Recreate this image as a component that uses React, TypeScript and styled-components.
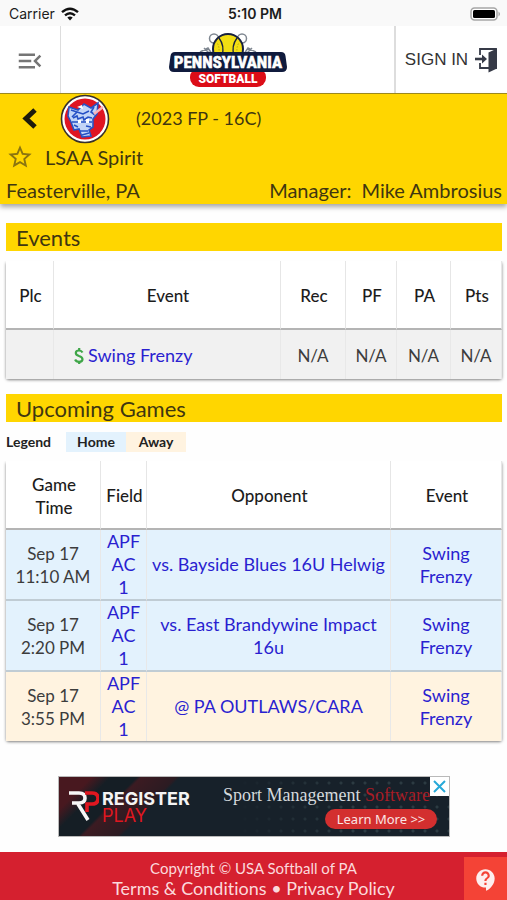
import React from "react";
import styled, { createGlobalStyle } from "styled-components";
import { MdContactSupport, MdMenuOpen, MdStarBorder } from "react-icons/md";

const GlobalStyle = createGlobalStyle`
  * { box-sizing: border-box; }
  body {
    margin: 0;
    background: #fefefe;
    color: #222;
    font-family: Lato, "Open Sans", sans-serif;
    font-size: 17px;
    line-height: 23px;
    font-variant-ligatures: none;
  }
  button { border: 0; padding: 0; background: none; font: inherit; color: inherit; cursor: pointer; }
  a { color: inherit; text-decoration: none; }
`;

const Page = styled.div`
  display: flex;
  flex-direction: column;
  min-height: 100vh;
`;

const StatusBar = styled.div`
  display: grid;
  grid-template-columns: 1fr auto 1fr;
  align-items: center;
  height: 26px;
  padding: 2px 6px 0 9px;
  background: #f9f9f9;
  color: #1c1c1c;
  font: 14px/20px Inter, sans-serif;
`;

const Carrier = styled.span`
  display: flex;
  align-items: center;
  gap: 6px;
`;

const Clock = styled.span`
  font-weight: 600;
`;

const Battery = styled.svg`
  justify-self: end;
`;

const TopBar = styled.header`
  display: grid;
  grid-template-columns: 61px 1fr 113px;
  height: 68px;
  background: #fff;
  border-bottom: 1px solid #a08c20;
`;

const MenuButton = styled.button`
  display: flex;
  align-items: center;
  justify-content: center;
  padding-top: 2px;
  border-right: 1px solid #ddd;
  color: #757575;
`;

const LogoLink = styled.a`
  display: flex;
  align-items: center;
  justify-content: center;
`;

const SignIn = styled.button`
  display: flex;
  align-items: center;
  justify-content: center;
  gap: 6px;
  border-left: 2px solid #ddd;
  color: #333;
  font: 17px/20px "Liberation Sans", sans-serif;
`;

const TeamPanel = styled.section`
  height: 110px;
  padding: 0 5px 0 6px;
  background: #ffd600;
  color: #3f3610;
  box-shadow: 0 3px 5px rgba(0, 0, 0, 0.35);
`;

const TeamTop = styled.div`
  display: flex;
  align-items: center;
  height: 49px;
  padding-left: 15px;
`;

const BackButton = styled.button`
  display: flex;
  margin-right: 22px;
`;

const Season = styled.span`
  margin-left: 26px;
  font-size: 18px;
`;

const TeamName = styled.div`
  display: flex;
  align-items: center;
  gap: 11px;
  height: 28px;
  font-size: 20px;
`;

const StarButton = styled.button`
  display: flex;
  color: #8a7410;
`;

const TeamPlace = styled.div`
  display: flex;
  align-items: center;
  justify-content: space-between;
  padding-top: 8px;
  font-size: 20px;
`;

const Manager = styled.span`
  display: flex;
  gap: 10px;
`;

const Main = styled.main`
  flex: 1;
  padding: 19px 5px 14px 6px;
`;

const SectionTitle = styled.h2`
  margin: 0 0 10px;
  padding: 1px 10px 0;
  background: #ffd600;
  color: #3f3610;
  font-size: 22px;
  font-weight: 400;
  line-height: 27px;
`;

const Table = styled.table`
  width: 100%;
  margin-bottom: 15px;
  table-layout: fixed;
  border-collapse: separate;
  border-spacing: 0;
  border-radius: 3px;
  box-shadow: 0 1px 3px rgba(0, 0, 0, 0.5);
  clip-path: inset(0 -4px -6px -4px);
`;

const Col = styled.col<{ $width?: number }>`
  width: ${(p) => (p.$width ? `${p.$width}px` : "auto")};
`;

const HeadCell = styled.th`
  height: 69px;
  padding: 2px 2px 0 4px;
  border-right: 1px solid #e6e6e6;
  border-bottom: 2px solid #b4b4b4;
  background: #fff;
  color: #1c1c1c;
  font-weight: 500;
`;

type Kind = "plain" | "home" | "away";
const fills: Record<Kind, string> = { plain: "#f1f1f1", home: "#e3f2fd", away: "#fff3e0" };

const Row = styled.tr<{ $kind: Kind }>`
  background: ${(p) => fills[p.$kind]};
`;

const Cell = styled.td<{ $left?: boolean }>`
  padding: ${(p) => (p.$left ? "2px 20px 0" : "2px 0 0")};
  text-align: ${(p) => (p.$left ? "left" : "center")};
  border-right: 1px solid #e8e8e8;
  color: #3c3c3c;

  tr:not(:last-child) > & { border-bottom: 2px solid #c0ccd4; }
  tr:last-child > & { height: 49px; }
`;

const GameCell = styled(Cell)`
  padding: 0;
`;

const TextLink = styled.a`
  color: #2a1fd0;
  font-size: 18px;
`;

const EventLink = styled(TextLink)`
  display: flex;
  align-items: center;
  gap: 4px;
`;

const Narrow = styled.div`
  max-width: 70px;
  margin: 0 auto;
`;

const NarrowField = styled.div`
  max-width: 36px;
  margin: 0 auto;
`;

const Legend = styled.div`
  display: flex;
  align-items: center;
  margin-bottom: 9px;
  font-size: 14px;
  font-weight: 700;
  line-height: 20px;
`;

const LegendLabel = styled.span`
  width: 60px;
`;

const LegendItem = styled.span<{ $kind: Kind }>`
  width: 60px;
  text-align: center;
  background: ${(p) => fills[p.$kind]};
`;

const Banner = styled.aside`
  position: relative;
  display: grid;
  grid-template-columns: 158px 1fr;
  width: 392px;
  max-width: 100%;
  height: 61px;
  margin: 35px auto 0;
  border: 1px solid #b9b9b9;
  background:
    linear-gradient(90deg, #17212a 45%, transparent 75%),
    radial-gradient(#2c3b42 1px, transparent 2px) 0 0 / 12px 12px,
    #17212a;
`;

const Brand = styled.div`
  display: flex;
  align-items: center;
  gap: 3px;
  padding-left: 9px;
  background: linear-gradient(135deg, #48181f 0, #48181f 15%, #151e25 24%, #151e25 36%, #3c1b22 38%, #2b1b22 54%, #17212a 56%);
`;

const BrandWords = styled.div`
  color: #f4f4f4;
  font: 700 18px/17px Inter, sans-serif;
`;

const BrandPlay = styled.div`
  color: #df1720;
  font-weight: 400;
`;

const Pitch = styled.div`
  display: flex;
  flex-direction: column;
  gap: 3px;
  padding: 7px 12px 0 6px;
  color: #d4d9dc;
  font: 18px/22px "Liberation Serif", serif;
  white-space: nowrap;
`;

const PitchAccent = styled.span`
  color: #a81c25;
`;

const LearnMore = styled.a`
  align-self: flex-end;
  width: 112px;
  border-radius: 10px;
  background: #d32f2f;
  color: #fbe4e4;
  text-align: center;
  font: 13px/20px "Noto Sans", sans-serif;
`;

const CloseAd = styled.button`
  position: absolute;
  top: 0;
  right: 0;
  display: flex;
  align-items: center;
  justify-content: center;
  width: 19px;
  height: 19px;
  background: #fff;
`;

const Footer = styled.footer`
  padding: 6px 0 1px;
  background: #d5202f;
  color: #fbd9dc;
  text-align: center;
  font-size: 15px;
  line-height: 20px;
`;

const FooterLinks = styled.nav`
  font-size: 18px;
  line-height: 21px;
`;

const HelpButton = styled.button`
  position: fixed;
  right: 0;
  bottom: 0;
  display: flex;
  align-items: center;
  justify-content: center;
  width: 43px;
  height: 43px;
  padding-top: 3px;
  background: #f44336;
  color: #fdeeee;
`;

const WifiIcon = () => (
  <svg width="18" height="14" viewBox="0 0 18 14" fill="none" stroke="#111" strokeWidth="2.4">
    <path d="M1 5.2Q9-1.8 17 5.2" />
    <path d="M4 8.4Q9 4 14 8.4" />
    <path d="M6.3 10.6Q9 8.3 11.7 10.6L9 13.4Z" fill="#111" stroke="none" />
  </svg>
);

const DollarIcon = () => (
  <svg width="10" height="18" viewBox="0 0 10 18" fill="none" stroke="#3fa648" strokeWidth="2.2">
    <path d="M8.500 5.500Q7.500 3.500 5 3.500 1.800 3.500 1.800 6 1.800 8 5 9q3.500 1 3.500 3.300 0 2.500-3.400 2.500-3 0-4-2.300" />
    <path d="M5.200 1v3M5.200 14v3" />
  </svg>
);

const SignInIcon = () => (
  <svg width="24" height="26" viewBox="0 0 24 26">
    <path d="M6 8V2h16v19h-5M6 16v5h9" fill="none" stroke="#363a47" strokeWidth="1.8" />
    <path d="M14.500 5.500 23 1.500v20l-8.500 4z" fill="#363a47" />
    <path d="M1 12h8" stroke="#363a47" strokeWidth="2.600" />
    <path d="M8 7.500 13 12l-5 4.500z" fill="#363a47" />
  </svg>
);

const PennLogo = () => (
  <svg width="120" height="56" viewBox="0 0 120 56" role="img" aria-label="Pennsylvania Softball">
    <g fill="none" stroke="#7f8791" strokeWidth="1.500">
      <circle cx="46" cy="6.500" r="4.500" />
      <circle cx="74" cy="6.500" r="4.500" />
      <path d="M49 9l6 6M71 9l-6 6M32 20l8-4 4 6M88 20l-8-4-4 6M36 16l6 6M84 16l-6 6" />
    </g>
    <circle cx="60" cy="17" r="15" fill="#f2de12" stroke="#17203e" strokeWidth="2" />
    <path d="M51 6q6 8 3 18M69 6q-6 8-3 18" fill="none" stroke="#17203e" strokeWidth="1.300" />
    <path d="M48 9q5 7 2 15M72 9q-5 7-2 15" fill="none" stroke="#9c8c18" strokeWidth="1" strokeDasharray="1 2" />
    <rect x="22" y="36" width="76" height="19" rx="9" fill="#dc0d17" />
    <path d="M7 20H113Q117 20 117.500 24L119 35Q119 40 114 40H6Q1 40 1 35L2.500 24Q3 20 7 20Z" fill="#101b3d" />
    <text x="60" y="36" textAnchor="middle" fill="#fff" stroke="#fff" strokeWidth="0.600" fontFamily="'Liberation Sans Narrow', 'Roboto Condensed', Roboto, sans-serif" fontWeight="700" fontSize="17">PENNSYLVANIA</text>
    <text x="60" y="51" textAnchor="middle" fill="#fff" fontFamily="Roboto, sans-serif" fontWeight="900" fontSize="12">SOFTBALL</text>
  </svg>
);

const TeamBadge = () => (
  <svg width="50" height="50" viewBox="0 0 50 50" role="img" aria-label="LSAA Spirit">
    <circle cx="25" cy="25" r="23.500" fill="#fff" stroke="#37302b" strokeWidth="1.600" />
    <circle cx="25" cy="25" r="20.500" fill="#df1523" />
    <path d="M9 13 18 16 24 10 31 14 38 9 37 20 33 25 33 33 29 36 31 42 22 43 19 35 14 36 11 28 8 22z" fill="#c3d5f7" stroke="#2851c4" strokeWidth="1.600" />
    <path d="m11 16 6 2-5 5M34 13l-3 5 4 3M17 18l6 2 6-3M13 24l4-2 1 3 5-2 1 3 4-3 4 1M12 28h20M14 31l4 2M26 32l5 1M20 37h8M22 41l7-2" fill="none" stroke="#2550c5" strokeWidth="1.600" />
    <path d="M18 26h3v3h-3zM26 25h3v4h-3zM17 13l5-2 1 4z" fill="#fff" />
    <path d="m34 20 9-7" stroke="#f9b4b9" strokeWidth="2.500" />
  </svg>
);

const BrandMark = () => (
  <svg width="31" height="32" viewBox="0 0 31 32" fill="none" strokeWidth="3.600">
    <path d="M1 2h10q6 0 6 5t-6 5H4M10 13l10 16" stroke="#f7f7f7" />
    <path d="M17 2h7q6 0 6 5.500T24 13h-5v8" stroke="#e01720" />
  </svg>
);

const games: { time: string; kind: Kind; opponent: string }[] = [
  { time: "11:10 AM", kind: "home", opponent: "vs. Bayside Blues 16U Helwig" },
  { time: "2:20 PM", kind: "home", opponent: "vs. East Brandywine Impact 16u" },
  { time: "3:55 PM", kind: "away", opponent: "@ PA OUTLAWS/CARA" },
];

export default function App() {
  return (
    <Page>
      <GlobalStyle />
      <StatusBar>
        <Carrier>Carrier <WifiIcon /></Carrier>
        <Clock>5:10 PM</Clock>
        <Battery width="31" height="14" viewBox="0 0 31 14">
          <rect x="1" y="1" width="26" height="12" rx="3.500" fill="#fff" stroke="#a6a6a6" strokeWidth="1.500" />
          <rect x="3" y="3" width="22" height="8" rx="1.500" fill="#000" />
          <path d="M28.500 4.500q3 2.500 0 5z" fill="#a6a6a6" />
        </Battery>
      </StatusBar>
      <TopBar>
        <MenuButton aria-label="Menu"><MdMenuOpen size={30} /></MenuButton>
        <LogoLink href="#"><PennLogo /></LogoLink>
        <SignIn>SIGN IN <SignInIcon /></SignIn>
      </TopBar>
      <TeamPanel>
        <TeamTop>
          <BackButton aria-label="Back">
            <svg width="17" height="22" viewBox="0 0 17 22" fill="none" stroke="#1d1a0c" strokeWidth="5">
              <path d="M14 2 5 10.500l9 8.500" />
            </svg>
          </BackButton>
          <TeamBadge />
          <Season>(2023 FP - 16C)</Season>
        </TeamTop>
        <TeamName>
          <StarButton aria-label="Favorite"><MdStarBorder size={28} /></StarButton>
          LSAA Spirit
        </TeamName>
        <TeamPlace>
          <span>Feasterville, PA</span>
          <Manager><span>Manager:</span><span>Mike Ambrosius</span></Manager>
        </TeamPlace>
      </TeamPanel>
      <Main>
        <SectionTitle>Events</SectionTitle>
        <Table>
          <colgroup>
            <Col $width={48} /><Col /><Col $width={65} /><Col $width={51} /><Col $width={54} /><Col $width={51} />
          </colgroup>
          <thead>
            <tr>
              {["Plc", "Event", "Rec", "PF", "PA", "Pts"].map((h) => <HeadCell key={h}>{h}</HeadCell>)}
            </tr>
          </thead>
          <tbody>
            <Row $kind="plain">
              <Cell />
              <Cell $left>
                <EventLink href="#"><DollarIcon />Swing Frenzy</EventLink>
              </Cell>
              <Cell>N/A</Cell><Cell>N/A</Cell><Cell>N/A</Cell><Cell>N/A</Cell>
            </Row>
          </tbody>
        </Table>
        <SectionTitle>Upcoming Games</SectionTitle>
        <Legend>
          <LegendLabel>Legend</LegendLabel>
          <LegendItem $kind="home">Home</LegendItem>
          <LegendItem $kind="away">Away</LegendItem>
        </Legend>
        <Table>
          <colgroup>
            <Col $width={95} /><Col $width={46} /><Col /><Col $width={111} />
          </colgroup>
          <thead>
            <tr>
              <HeadCell><Narrow>Game Time</Narrow></HeadCell>
              <HeadCell>Field</HeadCell>
              <HeadCell>Opponent</HeadCell>
              <HeadCell>Event</HeadCell>
            </tr>
          </thead>
          <tbody>
            {games.map((g) => (
              <Row $kind={g.kind} key={g.time}>
                <GameCell>Sep 17<br />{g.time}</GameCell>
                <GameCell><NarrowField><TextLink href="#">APF AC 1</TextLink></NarrowField></GameCell>
                <GameCell><TextLink href="#">{g.opponent}</TextLink></GameCell>
                <GameCell><Narrow><TextLink href="#">Swing Frenzy</TextLink></Narrow></GameCell>
              </Row>
            ))}
          </tbody>
        </Table>
        <Banner>
          <Brand>
            <BrandMark />
            <BrandWords>REGISTER<BrandPlay>PLAY</BrandPlay></BrandWords>
          </Brand>
          <Pitch>
            <span>Sport Management <PitchAccent>Software</PitchAccent></span>
            <LearnMore href="#">Learn More &gt;&gt;</LearnMore>
          </Pitch>
          <CloseAd aria-label="Close ad">
            <svg width="13" height="13" viewBox="0 0 13 13" stroke="#27a9d8" strokeWidth="2"><path d="m1 1 11 11M12 1 1 12" /></svg>
          </CloseAd>
        </Banner>
      </Main>
      <Footer>
        <div>Copyright © USA Softball of PA</div>
        <FooterLinks><a href="#">Terms &amp; Conditions</a> • <a href="#">Privacy Policy</a></FooterLinks>
      </Footer>
      <HelpButton aria-label="Help"><MdContactSupport size={26} /></HelpButton>
    </Page>
  );
}
